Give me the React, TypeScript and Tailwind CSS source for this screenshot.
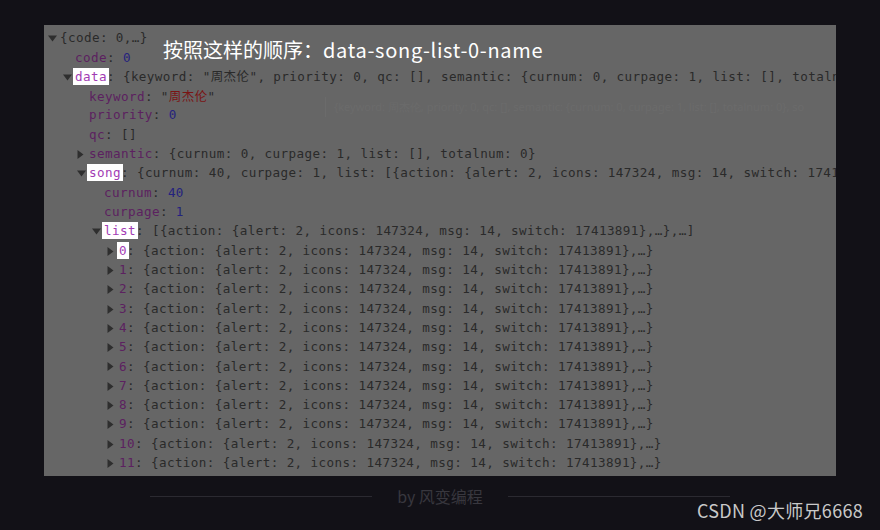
import { FC, ReactNode } from "react";

type Row = {
  level: number;
  arrow?: "down" | "right";
  content: ReactNode;
};

const Key: FC<{ children: ReactNode; hl?: boolean }> = ({ children, hl }) =>
  hl ? (
    <span className="bg-white text-[#a23cb4] px-[2px] -mx-[2px] py-[1px]">{children}</span>
  ) : (
    <span className="text-[#5c2160]">{children}</span>
  );

const Num: FC<{ children: ReactNode }> = ({ children }) => (
  <span className="text-[#24227e]">{children}</span>
);

const Cjk: FC<{ children: ReactNode; className?: string }> = ({ children, className }) => (
  <span className={`font-['Noto_Sans_CJK_SC',sans-serif] text-[12.5px] ${className ?? ""}`}>{children}</span>
);

const item = "{action: {alert: 2, icons: 147324, msg: 14, switch: 17413891},…}";

const rows: Row[] = [
  { level: 0, arrow: "down", content: <>{"{code: 0,…}"}</> },
  { level: 1, content: <><Key>code</Key>: <Num>0</Num></> },
  {
    level: 1,
    arrow: "down",
    content: (
      <>
        <Key hl>data</Key>: {"{keyword: \""}<Cjk>周杰伦</Cjk>{"\", priority: 0, qc: [], semantic: {curnum: 0, curpage: 1, list: [], totalnum: 0}, song: {…}}"}
      </>
    ),
  },
  {
    level: 2,
    content: (
      <>
        <Key>keyword</Key>: "<Cjk className="text-[#7a1414]">周杰伦</Cjk>"
      </>
    ),
  },
  { level: 2, content: <><Key>priority</Key>: <Num>0</Num></> },
  { level: 2, content: <><Key>qc</Key>: []</> },
  {
    level: 2,
    arrow: "right",
    content: <><Key>semantic</Key>: {"{curnum: 0, curpage: 1, list: [], totalnum: 0}"}</>,
  },
  {
    level: 2,
    arrow: "down",
    content: (
      <>
        <Key hl>song</Key>: {"{curnum: 40, curpage: 1, list: [{action: {alert: 2, icons: 147324, msg: 14, switch: 17413891},…},…], totalnum: 40}"}
      </>
    ),
  },
  { level: 3, content: <><Key>curnum</Key>: <Num>40</Num></> },
  { level: 3, content: <><Key>curpage</Key>: <Num>1</Num></> },
  {
    level: 3,
    arrow: "down",
    content: <><Key hl>list</Key>: {"[{action: {alert: 2, icons: 147324, msg: 14, switch: 17413891},…},…]"}</>,
  },
  { level: 4, arrow: "right", content: <><Key hl>0</Key>: {item}</> },
  ...Array.from({ length: 11 }, (_, i) => ({
    level: 4,
    arrow: "right" as const,
    content: (
      <>
        <Key>{String(i + 1)}</Key>: {item}
      </>
    ),
  })),
];

const Arrow: FC<{ dir?: "down" | "right" }> = ({ dir }) => (
  <span className="w-[12px] shrink-0 flex items-center">
    {dir === "down" && (
      <svg width="9" height="7" viewBox="0 0 9 7">
        <path d="M0 0.5 L9 0.5 L4.5 6.5 Z" fill="#2e2e2e" />
      </svg>
    )}
    {dir === "right" && (
      <svg width="7" height="9" viewBox="0 0 7 9">
        <path d="M0.5 0 L6.5 4.5 L0.5 9 Z" fill="#2e2e2e" />
      </svg>
    )}
  </span>
);

const levelPad = ["pl-[4px]", "pl-[19px]", "pl-[33px]", "pl-[48px]", "pl-[63px]"];

const App: FC = () => {
  return (
    <div className="w-[880px] h-[530px] bg-[#121117] relative overflow-hidden">
      <div className="ml-[44px] mt-[25px] w-[792px] h-[451px] bg-[#666666] overflow-hidden relative pt-[4px] font-['DejaVu_Sans_Mono',monospace] text-[12.6px] text-[#2a2a2a] tracking-[0.4px]">
        {rows.map((r, i) => (
          <div key={i} className={`flex items-center h-[19.32px] whitespace-nowrap ${levelPad[r.level]}`}>
            <Arrow dir={r.arrow} />
            <span>{r.content}</span>
          </div>
        ))}

        {/* faint hover tooltip */}
        <div className="absolute left-[281px] top-[72px] h-[20px] border-l border-[#6b6b6b] pl-[8px] flex items-center whitespace-nowrap font-['Noto_Sans',sans-serif] text-[11px] tracking-normal text-[#6b6b6b]">
          {"{keyword: 周杰伦, priority: 0, qc: [], semantic: {curnum: 0, curpage: 1, list: [], totalnum: 0}, so"}
        </div>

        {/* caption */}
        <div className="absolute left-[119px] top-[10px] text-white text-[20px] tracking-normal font-['Noto_Sans_CJK_SC',sans-serif] whitespace-nowrap">
          按照这样的顺序：<span className="tracking-[0.7px]">data-song-list-0-name</span>
        </div>
      </div>

      <div className="mt-[10px] h-[20px] flex items-center justify-center">
        <div className="w-[222px] h-px bg-[#2b2a31]" />
        <span className="mx-[25px] text-[16px] text-[#38373e] font-['Noto_Sans_CJK_SC',sans-serif]">by 风变编程</span>
        <div className="w-[222px] h-px bg-[#2b2a31]" />
      </div>

      <div className="absolute right-[17px] top-[497px] text-[18px] tracking-[0.3px] text-[#c9c9c9] font-['Noto_Sans_CJK_SC',sans-serif] whitespace-nowrap">
        CSDN @大师兄6668
      </div>
    </div>
  );
};

export default App;
